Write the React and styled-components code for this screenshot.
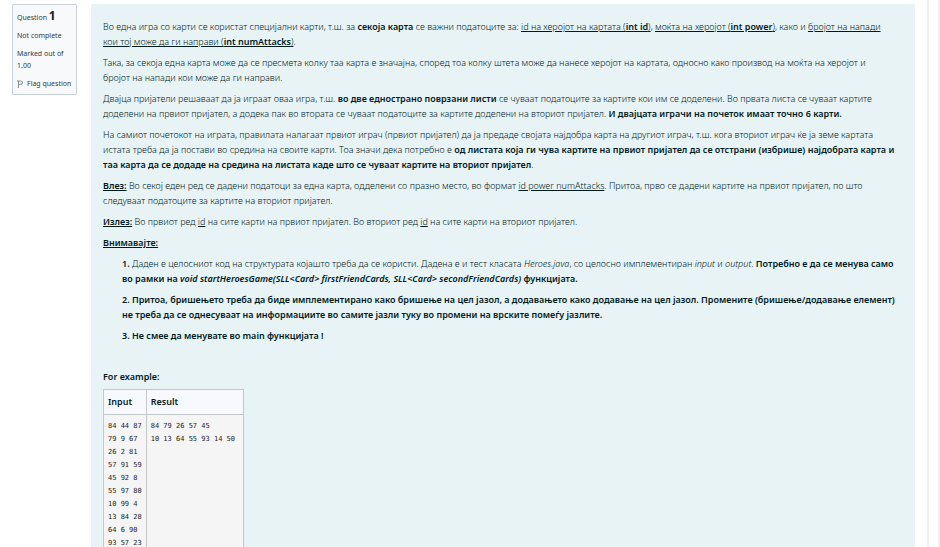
import React from "react";
import styled, { createGlobalStyle } from "styled-components";

const GlobalStyle = createGlobalStyle`
  *, *::before, *::after { box-sizing: border-box; }
  body {
    margin: 0;
    background: #fff;
    color: #001a1e;
    font-family: "Noto Sans", "Open Sans", sans-serif;
    font-size: 9px;
    font-weight: 300;
    line-height: 15px;
    overflow: hidden;
  }
`;

const Page = styled.div`
  display: flex;
  height: 100vh;
  overflow: hidden;
`;

const Region = styled.main`
  flex: 1;
  display: flex;
  align-items: flex-start;
  gap: 14px;
  padding: 4px 12px 0;
  border-right: 2px solid #f1f1f1;
`;

const Gutter = styled.div`
  width: 11px;
  border-right: 2px solid #f1f1f1;
`;

const Info = styled.aside`
  flex: none;
  width: 65px;
  display: flex;
  flex-direction: column;
  gap: 6px;
  padding: 5px 4px 4px;
  background: #f8f9fa;
  border: 1px solid #cad0d7;
  border-radius: 1px;
  color: #343a40;
  font-size: 7px;
  font-weight: 400;
  line-height: 12px;
`;

const QuestionTitle = styled.h3`
  margin: 0;
  font-size: 7px;
  font-weight: 400;
  line-height: 12px;
`;

const QuestionNumber = styled.span`
  font-size: 12px;
  font-weight: 700;
  color: #1d2125;
`;

const FlagButton = styled.button`
  display: flex;
  align-items: center;
  gap: 4px;
  padding: 0;
  border: 0;
  background: none;
  color: inherit;
  font: inherit;
  white-space: nowrap;
`;

const Flag = styled.svg`
  flex: none;
`;

const Formulation = styled.section`
  flex: 1;
  min-width: 0;
  display: flex;
  flex-direction: column;
  gap: 6px;
  padding: 15px 4px 0 12px;
  background: #e7f3f5;
  border-radius: 2px;

  b { font-weight: 600; }
`;

const Paragraph = styled.p`
  margin: 0;
`;

const Notes = styled.div`
  display: flex;
  flex-direction: column;
  gap: 6px;
  padding-left: 19px;
`;

const Example = styled.div`
  padding-top: 20px;
`;

const ExampleTitle = styled.p`
  margin: 0 0 5px;
  font-weight: 600;
`;

const ResultTable = styled.table`
  border-collapse: collapse;
  background: #f5f5f5;
`;

const HeadCell = styled.th`
  padding: 4px;
  border: 1px solid #c3c7c8;
  background: #f8f8ff;
  font-weight: 600;
  text-align: left;
  line-height: 16px;
`;

const Cell = styled.td`
  padding: 5px 4px;
  border: 1px solid #c3c7c8;
  vertical-align: top;

  &:last-child { padding-right: 8px; }
`;

const Output = styled.pre`
  margin: 0;
  font-family: "DejaVu Sans Mono", monospace;
  font-size: 7px;
  font-weight: 400;
  line-height: 13px;
  color: #1d2125;
`;

const input = `84 44 87
79 9 67
26 2 81
57 91 59
45 92 8
55 97 80
10 99 4
13 84 28
64 6 90
93 57 23`;

const result = `84 79 26 57 45
10 13 64 55 93 14 50`;

function FlagIcon() {
  return (
    <Flag width="6" height="8" viewBox="0 0 6 8" fill="none" stroke="#6a737b" aria-hidden="true">
      <path d="M1.5 1v7M0 1h3.5l2 .8L5 4 1.5 4.5" strokeWidth="0.8" />
    </Flag>
  );
}

export default function App() {
  return (
    <>
      <GlobalStyle />
      <Page>
        <Region>
          <Info>
            <QuestionTitle>Question <QuestionNumber>1</QuestionNumber></QuestionTitle>
            <div>Not complete</div>
            <div>Marked out of<br />1.00</div>
            <FlagButton type="button"><FlagIcon />Flag question</FlagButton>
          </Info>
          <Formulation>
            <Paragraph>
              Во една игра со карти се користат специјални карти, т.ш. за <b>секоја карта</b> се важни податоците за: <u>id на херојот на картата (<b>int id</b>)</u>, <u>моќта на херојот (<b>int power</b>)</u>, како и <u>бројот на напади<br />кои тој може да ги направи (<b>int numAttacks</b>)</u>.
            </Paragraph>
            <Paragraph>
              Така, за секоја една карта може да се пресмета колку таа карта е значајна, според тоа колку штета може да нанесе херојот на картата, односно како производ на моќта на херојот и<br />бројот на напади кои може да ги направи.
            </Paragraph>
            <Paragraph>
              Двајца пријатели решаваат да ја играат оваа игра, т.ш. <b>во две еднострано поврзани листи</b> се чуваат податоците за картите кои им се доделени. Во првата листа се чуваат картите<br />доделени на првиот пријател, а додека пак во втората се чуваат податоците за картите доделени на вториот пријател. <b>И двајцата играчи на почеток имаат точно 6 карти.</b>
            </Paragraph>
            <Paragraph>
              На самиот почетокот на играта, правилата налагаат првиот играч (првиот пријател) да ја предаде својата најдобра карта на другиот играч, т.ш. кога вториот играч ќе ја земе картата<br />истата треба да ја постави во средина на своите карти. Тоа значи дека потребно е <b>од листата која ги чува картите на првиот пријател да се отстрани (избрише) најдобрата карта и<br />таа карта да се додаде на средина на листата каде што се чуваат картите на вториот пријател</b>.
            </Paragraph>
            <Paragraph>
              <b><u>Влез:</u></b> Во секој еден ред се дадени податоци за една карта, одделени со празно место, во формат <u>id power numAttacks</u>. Притоа, прво се дадени картите на првиот пријател, по што<br />следуваат податоците за картите на вториот пријател.
            </Paragraph>
            <Paragraph>
              <b><u>Излез:</u></b> Во првиот ред <u>id</u> на сите карти на првиот пријател. Во вториот ред <u>id</u> на сите карти на вториот пријател.
            </Paragraph>
            <Paragraph><b><u>Внимавајте:</u></b></Paragraph>
            <Notes>
              <Paragraph>
                <b>1.</b> Даден е целосниот код на структурата којашто треба да се користи. Дадена е и тест класата <i>Heroes.java</i>, со целосно имплементиран <i>input</i> и <i>output</i>. <b>Потребно е да се менува само<br />во рамки на <i>void startHeroesGame(SLL&lt;Card&gt; firstFriendCards, SLL&lt;Card&gt; secondFriendCards)</i> функцијата.</b>
              </Paragraph>
              <Paragraph>
                <b>2. Притоа, бришењето треба да биде имплементирано како бришење на цел јазол, а додавањето како додавање на цел јазол. Промените (бришење/додавање елемент)<br />не треба да се однесуваат на информациите во самите јазли туку во промени на врските помеѓу јазлите.</b>
              </Paragraph>
              <Paragraph><b>3. Не смее да менувате во main функцијата !</b></Paragraph>
            </Notes>
            <Example>
              <ExampleTitle>For example:</ExampleTitle>
              <ResultTable>
                <thead>
                  <tr><HeadCell scope="col">Input</HeadCell><HeadCell scope="col">Result</HeadCell></tr>
                </thead>
                <tbody>
                  <tr>
                    <Cell><Output>{input}</Output></Cell>
                    <Cell><Output>{result}</Output></Cell>
                  </tr>
                </tbody>
              </ResultTable>
            </Example>
          </Formulation>
        </Region>
        <Gutter />
      </Page>
    </>
  );
}
